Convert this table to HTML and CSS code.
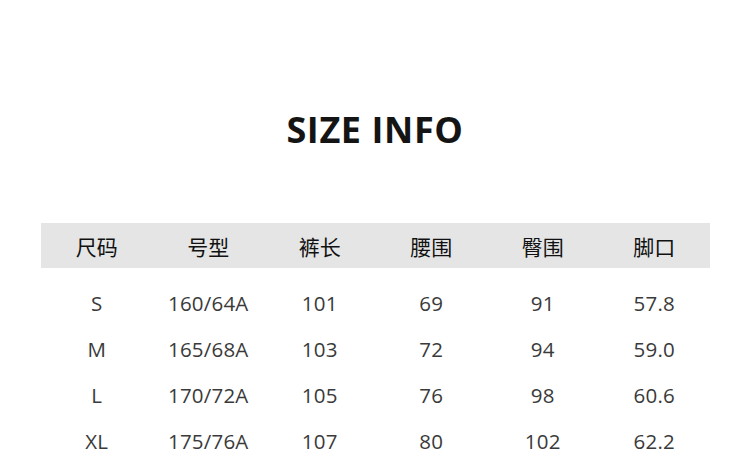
FILE: index.html
```html
<!DOCTYPE html>
<html lang="zh">
<head>
<meta charset="utf-8">
<link rel="stylesheet" href="styles.css">
</head>
<body>
<div class="page">
  <h1 class="title">SIZE INFO</h1>
  <div class="table">
    <div class="row head">
      <div>尺码</div><div>号型</div><div>裤长</div><div>腰围</div><div>臀围</div><div>脚口</div>
    </div>
    <div class="row">
      <div>S</div><div>160/64A</div><div>101</div><div>69</div><div>91</div><div>57.8</div>
    </div>
    <div class="row">
      <div>M</div><div>165/68A</div><div>103</div><div>72</div><div>94</div><div>59.0</div>
    </div>
    <div class="row">
      <div>L</div><div>170/72A</div><div>105</div><div>76</div><div>98</div><div>60.6</div>
    </div>
    <div class="row">
      <div>XL</div><div>175/76A</div><div>107</div><div>80</div><div>102</div><div>62.2</div>
    </div>
  </div>
</div>
</body>
</html>
```
FILE: styles.css
```css
html, body {
  margin: 0;
  padding: 0;
  background: #ffffff;
}
.page {
  width: 750px;
  height: 464px;
  overflow: hidden;
  font-family: "Open Sans", "Noto Sans CJK SC", sans-serif;
}
.title {
  margin: 0;
  padding-top: 104px;
  margin-bottom: 67px;
  text-align: center;
  font-size: 36px;
  line-height: 52px;
  font-weight: 700;
  letter-spacing: 0.6px;
  color: #141414;
}
.table {
  margin-left: 41px;
  width: 669px;
}
.row {
  display: grid;
  grid-template-columns: repeat(6, 1fr);
  height: 46px;
  align-items: center;
  text-align: center;
  font-size: 20.5px;
  letter-spacing: 0.2px;
  color: #3a3a3a;
}
.row.head {
  height: 45px;
  background: #e5e5e5;
  font-family: "Noto Sans CJK SC", sans-serif;
  font-size: 21px;
  letter-spacing: 0;
  color: #111111;
  margin-bottom: 12px;
}
```
